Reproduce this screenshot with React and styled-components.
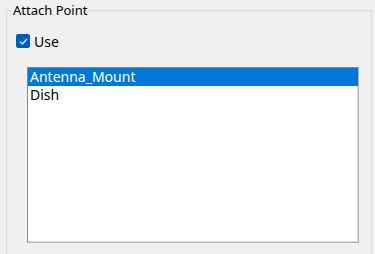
import React, { useState } from 'react';
import styled, { createGlobalStyle } from 'styled-components';

const GlobalStyle = createGlobalStyle`
    html, body {
        margin: 0;
        padding: 0;
        background: #f0f0f0;
        font-family: "Noto Sans", "Open Sans", sans-serif;
        font-size: 14px;
        color: #000;
    }
`;

const Page = styled.div`
    height: 254px;
    overflow: hidden;
    padding: 2px 3px 0 6px;
`;

const GroupBox = styled.fieldset`
    margin: 0;
    padding: 0 12px 0 20px;
    border: 1px solid #dcdcdc;
    border-bottom: none;
    height: 280px;
    min-width: 0;

    legend {
        padding: 0 1px;
        margin-left: -15px;
        font-size: 13px;
        line-height: 16px;
    }
`;

const CheckRow = styled.label`
    display: flex;
    align-items: center;
    gap: 4px;
    margin: 13px 0 0 -11px;
    height: 20px;
    cursor: pointer;
`;

const Box = styled.span`
    box-sizing: border-box;
    width: 14px;
    height: 14px;
    border-radius: 2px;
    background: ${p => (p.checked ? '#005fb8' : '#fff')};
    border: 1px solid ${p => (p.checked ? '#005fb8' : '#333')};
    display: flex;
    align-items: center;
    justify-content: center;
`;

const ListBox = styled.div`
    margin-top: 16px;
    height: 174px;
    background: #fff;
    border: 1px solid #828790;
    border-right-color: #b4b4b4;
    border-bottom-color: #b4b4b4;
    box-shadow: inset -1px -1px 0 #dadada;
`;

const Item = styled.div`
    height: 18px;
    line-height: 18px;
    padding-left: 2px;
    background: ${p => (p.selected ? '#0078d7' : 'transparent')};
    color: ${p => (p.selected ? '#fff' : '#000')};
    white-space: nowrap;
`;

const items = ['Antenna_Mount', 'Dish'];

export default function App() {
    const [use, setUse] = useState(true);
    const [selected, setSelected] = useState(0);

    return (
        <>
            <GlobalStyle />
            <Page>
                <GroupBox>
                    <legend>Attach Point</legend>
                    <CheckRow onClick={() => setUse(!use)}>
                        <Box checked={use}>
                            {use && (
                                <svg width="9" height="7" viewBox="0 0 9 7">
                                    <path d="M1 3.6 L3.4 6 L8 1" fill="none" stroke="#fff" strokeWidth="1.2" />
                                </svg>
                            )}
                        </Box>
                        Use
                    </CheckRow>
                    <ListBox>
                        {items.map((name, i) => (
                            <Item key={name} selected={i === selected} onClick={() => setSelected(i)}>
                                {name}
                            </Item>
                        ))}
                    </ListBox>
                </GroupBox>
            </Page>
        </>
    );
}
